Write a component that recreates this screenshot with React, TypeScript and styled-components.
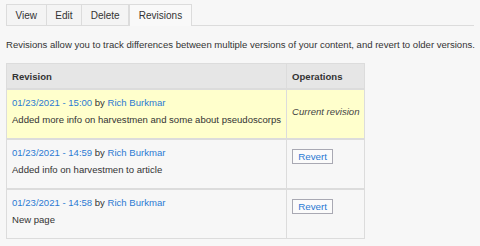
import React from "react";
import styled, { createGlobalStyle } from "styled-components";

const GlobalStyle = createGlobalStyle`
  html, body {
    margin: 0;
    padding: 0;
    background: #f7f7f7;
  }
  body {
    font-family: "Liberation Sans", Arial, sans-serif;
    font-size: 9.55px;
    color: #333;
  }
`;

const Page = styled.div`
  padding: 4px 6px 0 6px;
`;

const Tabs = styled.ul`
  display: flex;
  margin: 0;
  padding: 0;
  list-style: none;
  border-bottom: 1px solid #dcdcdc;
`;

const Tab = styled.li<{ $active?: boolean }>`
  height: 20px;
  padding: 0 8.6px;
  display: flex;
  align-items: center;
  border: 1px solid #dcdcdc;
  border-bottom: none;
  border-left-width: ${({ $active }) => ($active ? "1px" : "0")};
  background: ${({ $active }) => ($active ? "#f9f9f9" : "#f4f4f4")};
  margin-bottom: ${({ $active }) => ($active ? "-1px" : "0")};
  padding-bottom: ${({ $active }) => ($active ? "1px" : "0")};
  font-size: 10px;
  color: #333;
  &:first-child {
    border-left-width: 1px;
  }
`;

const Intro = styled.p`
  margin: 12px 0 11px 0;
  line-height: 14px;
  white-space: nowrap;
`;

const Table = styled.table`
  border-collapse: collapse;
  width: 357px;
  border: 1px solid #dcdcdc;
`;

const Th = styled.th`
  background: #e6e6e6;
  text-align: left;
  font-weight: bold;
  height: 24px;
  padding: 0 5px;
  border: 1px solid #dcdcdc;
  &:last-child {
    width: 66px;
  }
`;

const Tr = styled.tr<{ $current?: boolean }>`
  background: ${({ $current }) => ($current ? "#ffffcc" : "#f7f7f7")};
`;

const Td = styled.td<{ $top?: boolean }>`
  border: 1px solid #dcdcdc;
  border-width: 2px 1px 0 1px;
  padding: 4px 5px 10px 5px;
  vertical-align: ${({ $top }) => ($top ? "top" : "middle")};
  height: 34px;
  line-height: 17px;
  white-space: nowrap;
`;

const Current = styled.em`
  color: #444;
`;

const A = styled.a`
  color: #2b7ad3;
  text-decoration: none;
`;

const RevertButton = styled.button`
  font-family: "Liberation Sans", Arial, sans-serif;
  font-size: 9.8px;
  color: #2b7ad3;
  background: #fbfbfb;
  border: 1px solid #a9a9b3;
  width: 41px;
  height: 15px;
  padding: 0;
  line-height: 13px;
  margin-top: 5px;
`;

const revisions = [
  { date: "01/23/2021 - 15:00", msg: "Added more info on harvestmen and some about pseudoscorps", current: true },
  { date: "01/23/2021 - 14:59", msg: "Added info on harvestmen to article" },
  { date: "01/23/2021 - 14:58", msg: "New page" },
];

export default function App() {
  return (
    <>
      <GlobalStyle />
      <Page>
        <Tabs>
          <Tab>View</Tab>
          <Tab>Edit</Tab>
          <Tab>Delete</Tab>
          <Tab $active>Revisions</Tab>
        </Tabs>
        <Intro>
          Revisions allow you to track differences between multiple versions of your content, and revert to older versions.
        </Intro>
        <Table>
          <thead>
            <tr>
              <Th>Revision</Th>
              <Th>Operations</Th>
            </tr>
          </thead>
          <tbody>
            {revisions.map((r) => (
              <Tr key={r.date} $current={r.current}>
                <Td $top>
                  <A href="#">{r.date}</A> by <A href="#">Rich Burkmar</A>
                  <br />
                  {r.msg}
                </Td>
                <Td $top={!r.current}>
                  {r.current ? <Current>Current revision</Current> : <RevertButton>Revert</RevertButton>}
                </Td>
              </Tr>
            ))}
          </tbody>
        </Table>
      </Page>
    </>
  );
}
